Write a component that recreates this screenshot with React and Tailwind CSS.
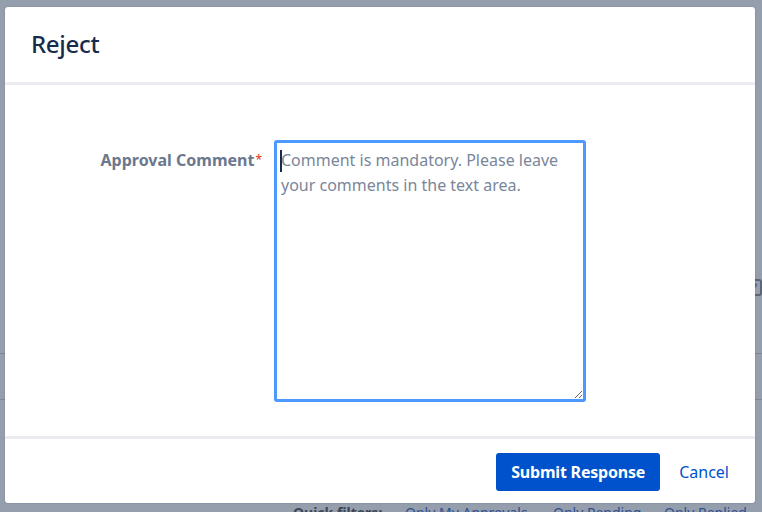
import React from "react";

export default function App() {
  const font = { fontFamily: '"Noto Sans", "Open Sans", sans-serif' };
  return (
    <div className="relative w-[762px] h-[512px] overflow-hidden bg-[#959ead]" style={font}>
      {/* page content behind the blanket */}
      <div className="flex flex-col w-full">
        <div className="h-[279px]" />
        <div className="flex justify-end h-[17px]">
          <div className="w-[14px] h-[17px] border-2 border-[#5d6676] rounded-[3px] text-[13px] leading-[13px] font-bold text-[#5d6676] pl-[1px]">?</div>
        </div>
        <div className="h-[57px]" />
        <div className="h-px bg-[#7f8897]" />
        <div className="h-[45px]" />
        <div className="h-px bg-[#7f8897]" />
        <div className="h-[103px]" />
        <div className="flex items-start text-[14px] leading-[20px] pl-[293px] whitespace-nowrap">
          <span className="w-[112px] shrink-0 font-bold text-[#3d4656]">Quick filters:</span>
          <span className="w-[148px] shrink-0 text-[#2f4f8f]">Only My Approvals</span>
          <span className="w-[111px] shrink-0 text-[#2f4f8f]">Only Pending</span>
          <span className="shrink-0 text-[#2f4f8f]">Only Replied</span>
        </div>
      </div>

      {/* dialog */}
      <div className="absolute left-[5px] top-[7px] w-[750px] h-[496px] bg-white rounded-[3px] shadow-[0_0_2px_rgba(9,30,66,0.2)] flex flex-col">
        <div className="h-[78px] flex items-center pl-[26px] pb-[2px] border-b-[3px] border-[#ebecf0] shrink-0">
          <h1 className="text-[24px] leading-[28px] font-medium text-[#172b4d] tracking-[-0.3px]">Reject</h1>
        </div>
        <div className="flex-1 pt-[55px] flex items-start">
          <div className="w-[257px] flex justify-end pt-[10px]">
            <label className="text-[16px] leading-[20px] font-bold text-[#6b778c]">
              Approval Comment<sup className="text-[#de350b] text-[12px] ml-[1px] font-normal relative top-[-2px]">*</sup>
            </label>
          </div>
          <div className="relative ml-[12px]">
            <textarea
              className="block w-[312px] h-[262px] border-[3px] border-[#4c9aff] rounded-[3px] px-[4px] py-[5px] text-[16px] leading-[25px] text-[#172b4d] placeholder:text-[#7a869a] outline-none"
              style={font}
              placeholder="Comment is mandatory. Please leave your comments in the text area."
            />
            <span className="absolute left-[6px] top-[10px] w-[2px] h-[22px] bg-[#172b4d]" />
          </div>
        </div>
        <div className="h-[67px] pt-[2px] border-t-[3px] border-[#ebecf0] flex items-center justify-end pr-[26px] gap-[19px] shrink-0">
          <button className="h-[38px] px-[15px] bg-[#0052cc] rounded-[3px] text-white font-bold text-[16px] leading-[20px] tracking-[-0.2px]">
            Submit Response
          </button>
          <button className="text-[#0052cc] text-[16px] leading-[20px]">Cancel</button>
        </div>
      </div>
    </div>
  );
}
